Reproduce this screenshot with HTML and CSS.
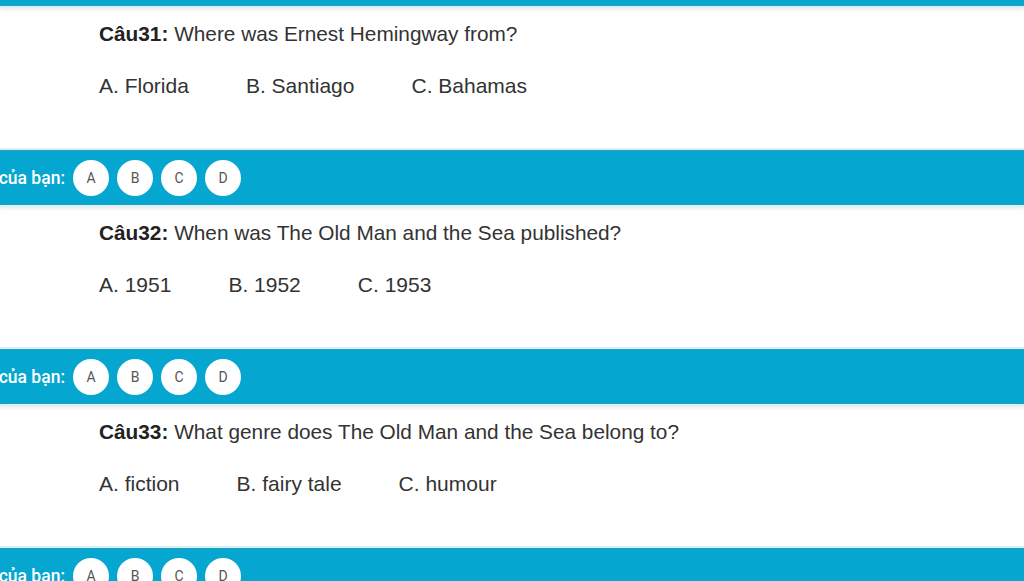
FILE: index.html
```html
<!DOCTYPE html>
<html lang="vi">
<head>
<meta charset="utf-8">
<title>Câu hỏi</title>
<link rel="stylesheet" href="styles.css">
</head>
<body>
<div class="page">
  <div class="bar bar-top"></div>
  <section class="question">
    <p class="q-text"><b>Câu31:</b> Where was Ernest Hemingway from?</p>
    <div class="options"><span>A. Florida</span><span>B. Santiago</span><span>C. Bahamas</span></div>
  </section>
  <div class="bar">
    <div class="label"><span>của bạn:</span></div>
    <div class="choices"><span class="choice">A</span><span class="choice">B</span><span class="choice">C</span><span class="choice">D</span></div>
  </div>
  <section class="question">
    <p class="q-text"><b>Câu32:</b> When was The Old Man and the Sea published?</p>
    <div class="options"><span>A. 1951</span><span>B. 1952</span><span>C. 1953</span></div>
  </section>
  <div class="bar">
    <div class="label"><span>của bạn:</span></div>
    <div class="choices"><span class="choice">A</span><span class="choice">B</span><span class="choice">C</span><span class="choice">D</span></div>
  </div>
  <section class="question">
    <p class="q-text"><b>Câu33:</b> What genre does The Old Man and the Sea belong to?</p>
    <div class="options"><span>A. fiction</span><span>B. fairy tale</span><span>C. humour</span></div>
  </section>
  <div class="bar">
    <div class="label"><span>của bạn:</span></div>
    <div class="choices"><span class="choice">A</span><span class="choice">B</span><span class="choice">C</span><span class="choice">D</span></div>
  </div>
</div>
</body>
</html>
```

FILE: styles.css
```css
html, body {
  margin: 0;
  padding: 0;
  background: #ffffff;
  overflow: hidden;
}
.page {
  width: 1024px;
  height: 581px;
  overflow: hidden;
  font-family: "Liberation Sans", Arial, sans-serif;
  color: #333333;
}
.bar {
  height: 53px;
  background: #05a6cf;
  border-top: 1px solid #2c9bb3;
  border-bottom: 1px solid #2c9bb3;
  box-shadow: 0 -2px 0 #d4f2f9, 0 2px 0 #d4f2f9, 0 4px 3px #ededed;
  display: flex;
  align-items: center;
}
.bar-top {
  margin-top: -49px;
}
.label {
  width: 65px;
  flex: none;
  display: flex;
  justify-content: flex-end;
  overflow: hidden;
  color: #ffffff;
  font-family: Roboto, "Liberation Sans", sans-serif;
  font-size: 17.5px;
  font-weight: 500;
  white-space: nowrap;
}
.label span {
  flex: none;
}
.choices {
  display: flex;
  gap: 8px;
  margin-left: 8px;
}
.choice {
  width: 36px;
  height: 36px;
  border-radius: 50%;
  background: #ffffff;
  display: flex;
  align-items: center;
  justify-content: center;
  font-family: Roboto, "Liberation Sans", sans-serif;
  font-size: 14px;
  color: #555555;
}
.question {
  height: 144px;
  padding-left: 99px;
  box-sizing: border-box;
}
.q-text {
  margin: 0;
  padding-top: 12px;
  font-size: 20.8px;
  line-height: 32px;
  color: #333333;
}
.q-text b {
  color: #222222;
}
.options {
  display: flex;
  gap: 57px;
  margin-top: 20px;
  font-size: 21px;
  line-height: 32px;
  color: #333333;
}
```
